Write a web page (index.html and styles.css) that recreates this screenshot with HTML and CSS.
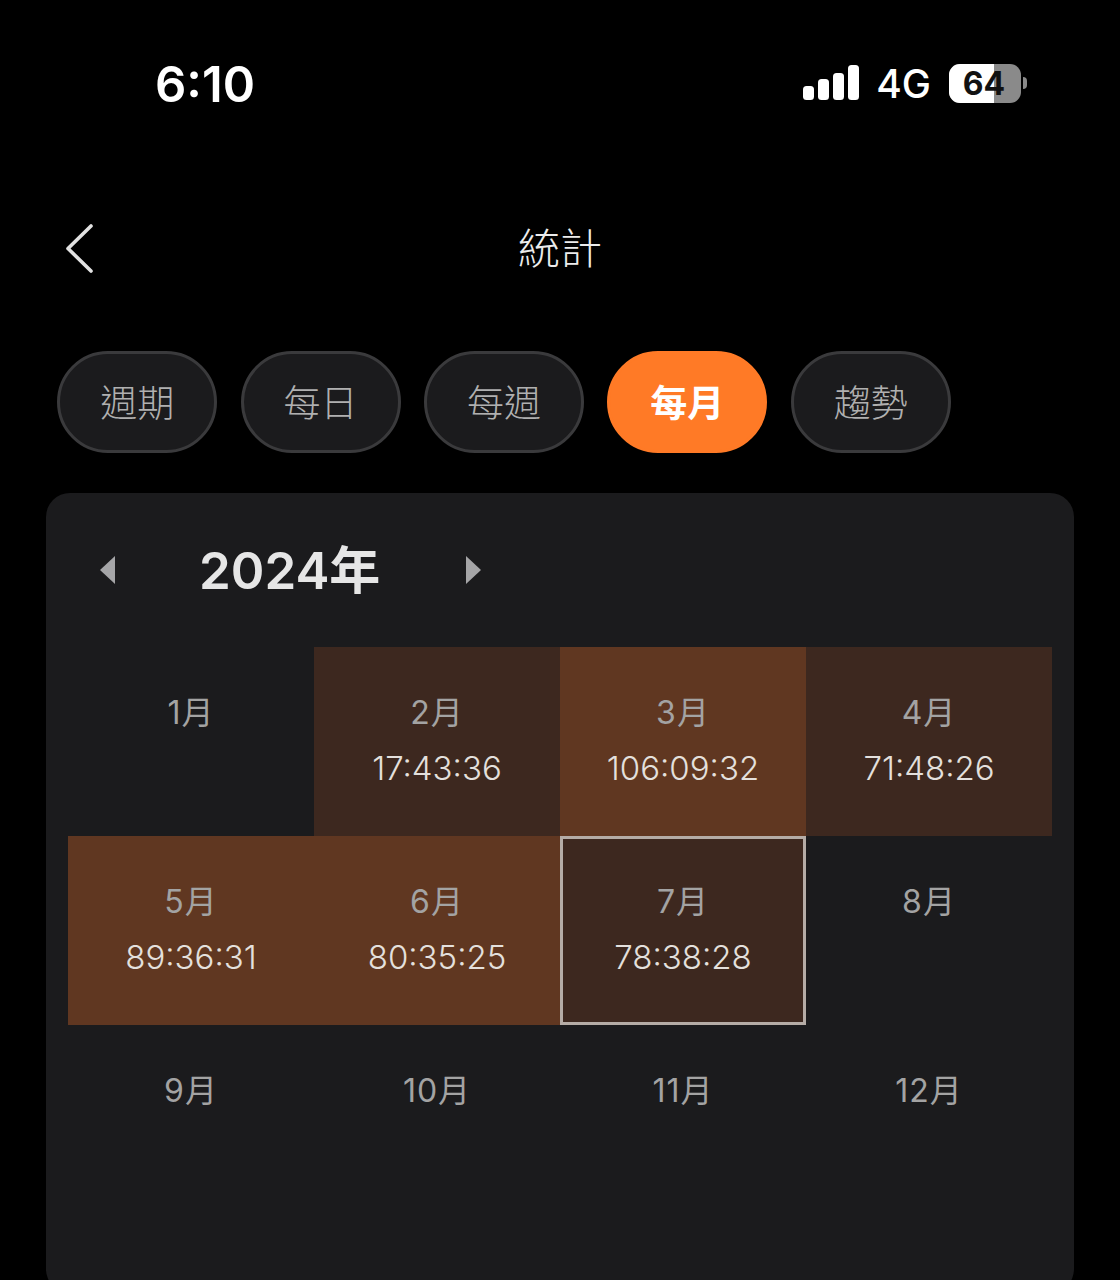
FILE: index.html
```html
<!DOCTYPE html>
<html lang="zh-Hant">
<head>
  <meta charset="UTF-8">
  <title>統計</title>
  <link rel="stylesheet" href="styles.css">
</head>
<body>
  <!-- Status bar -->
  <div class="status-bar">
    <div class="time">6:10</div>
    <div class="status-icons">
      <svg class="signal" width="56" height="36" viewBox="0 0 56 36">
        <rect x="0" y="21" width="11" height="14" rx="3.5" fill="#fff"/>
        <rect x="15" y="14" width="11" height="21" rx="3.5" fill="#fff"/>
        <rect x="30" y="8" width="11" height="27" rx="3.5" fill="#fff"/>
        <rect x="45" y="0" width="11" height="35" rx="3.5" fill="#fff"/>
      </svg>
      <span class="network">4G</span>
      <div class="battery">
        <div class="battery-body">
          <div class="battery-fill"></div>
          <span class="battery-level">64</span>
        </div>
        <div class="battery-cap"></div>
      </div>
    </div>
  </div>

  <!-- Navigation -->
  <div class="nav">
    <svg class="back" width="30" height="52" viewBox="0 0 30 52">
      <path d="M26 3 L3 25.5 L26 48" fill="none" stroke="#e2e2e2" stroke-width="3.6" stroke-linecap="round" stroke-linejoin="round"/>
    </svg>
    <div class="nav-title">統計</div>
  </div>

  <!-- Tabs -->
  <div class="tabs">
    <div class="tab">週期</div>
    <div class="tab">每日</div>
    <div class="tab">每週</div>
    <div class="tab active">每月</div>
    <div class="tab">趨勢</div>
  </div>

  <!-- Calendar card -->
  <div class="card">
    <div class="year-row">
      <div class="arrow arrow-left"></div>
      <div class="year">2024年</div>
      <div class="arrow arrow-right"></div>
    </div>
    <div class="months">
      <div class="month"><div class="month-name">1月</div></div>
      <div class="month low"><div class="month-name">2月</div><div class="month-time">17:43:36</div></div>
      <div class="month high"><div class="month-name">3月</div><div class="month-time">106:09:32</div></div>
      <div class="month low"><div class="month-name">4月</div><div class="month-time">71:48:26</div></div>
      <div class="month high"><div class="month-name">5月</div><div class="month-time">89:36:31</div></div>
      <div class="month high"><div class="month-name">6月</div><div class="month-time">80:35:25</div></div>
      <div class="month low selected"><div class="month-name">7月</div><div class="month-time">78:38:28</div></div>
      <div class="month"><div class="month-name">8月</div></div>
      <div class="month"><div class="month-name">9月</div></div>
      <div class="month"><div class="month-name">10月</div></div>
      <div class="month"><div class="month-name">11月</div></div>
      <div class="month"><div class="month-name">12月</div></div>
    </div>
  </div>
</body>
</html>
```

FILE: styles.css
```css
/* General body styling */
html, body {
  height: 1280px;
  overflow: hidden;
}

body {
  margin: 0;
  background: #000;
  color: #fff;
  font-family: Inter, "Noto Sans CJK TC", sans-serif;
}

/* Status bar */
.status-bar {
  display: flex;
  justify-content: space-between;
  align-items: center;
  height: 100px;
  padding: 33px 93px 0 155px;
}

.time {
  padding-top: 4px;
  font-size: 49px;
  font-weight: 600;
  line-height: 100px;
}

.status-icons {
  display: flex;
  align-items: center;
}

.signal {
  margin-right: 17px;
}

.network {
  font-size: 39px;
  font-weight: 500;
  margin-right: 18px;
  padding-top: 1px;
}

.battery {
  display: flex;
  align-items: center;
}

.battery-body {
  position: relative;
  width: 72px;
  height: 39px;
  border-radius: 11px;
  background: #8a8a8a;
  overflow: hidden;
  text-align: center;
}

.battery-fill {
  position: absolute;
  left: 0;
  top: 0;
  bottom: 0;
  width: 63%;
  background: #fff;
}

.battery-level {
  position: relative;
  left: -1px;
  font-size: 32px;
  font-weight: 700;
  line-height: 39px;
  color: #111;
}

.battery-cap {
  width: 4px;
  height: 12px;
  margin-left: 2px;
  background: #8a8a8a;
  border-radius: 0 6px 6px 0;
}

/* Navigation */
.nav {
  position: relative;
  height: 100px;
  margin-top: 67px;
  text-align: center;
}

.back {
  position: absolute;
  left: 65px;
  top: 23px;
}

.nav-title {
  font-size: 42px;
  font-weight: 300;
  line-height: 98px;
  color: #ececec;
}

/* Tabs */
.tabs {
  display: flex;
  gap: 23.4px;
  margin: 51px 0 0 57.2px;
}

.tab {
  box-sizing: border-box;
  width: 160px;
  height: 102px;
  border: 3px solid #3a3a3c;
  border-radius: 51px;
  background: #1b1b1d;
  color: #b0b0b0;
  font-size: 37px;
  font-weight: 300;
  line-height: 100px;
  text-align: center;
}

.tab.active {
  border-color: #ff7a26;
  background: #ff7a26;
  color: #fff;
  font-weight: 700;
}

/* Calendar card */
.card {
  height: 800px;
  margin: 40px 46px 0;
  padding: 0 22px;
  border-radius: 24px;
  background: #1b1b1d;
}

.year-row {
  display: flex;
  align-items: center;
  height: 154px;
  padding-left: 32px;
}

.arrow {
  width: 0;
  height: 0;
  border-top: 14px solid transparent;
  border-bottom: 14px solid transparent;
}

.arrow-left {
  border-right: 15px solid #a5a5a7;
}

.arrow-right {
  border-left: 15px solid #a5a5a7;
}

.year {
  width: 351px;
  margin-bottom: 7px;
  padding-left: 84px;
  box-sizing: border-box;
  font-size: 51px;
  font-weight: 600;
  color: #e6e6e6;
}

/* Month grid */
.months {
  display: grid;
  grid-template-columns: repeat(4, 246px);
  grid-auto-rows: 189px;
}

.month {
  box-sizing: border-box;
  padding-top: 42px;
  text-align: center;
}

.month.low {
  background: #3d281f;
}

.month.high {
  background: #603721;
}

.month.selected {
  padding-top: 39px;
  border: 3px solid #b5aca6;
}

.month-name {
  font-size: 32px;
  font-weight: 400;
  letter-spacing: 1px;
  line-height: 48px;
  color: #a3a3a3;
}

.month-time {
  margin-top: 7px;
  font-size: 33px;
  font-weight: 300;
  line-height: 48px;
  color: #e4e0dd;
}
```
